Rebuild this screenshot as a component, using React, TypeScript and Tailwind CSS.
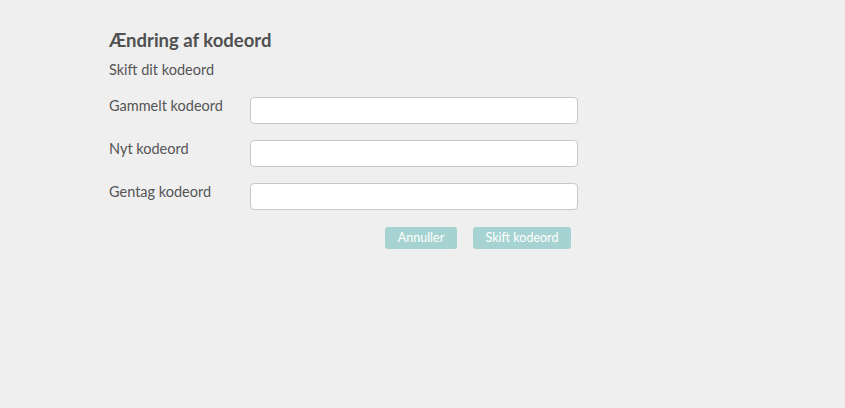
export default function App() {
  const fields = ["Gammelt kodeord", "Nyt kodeord", "Gentag kodeord"];

  return (
    <div className="min-h-[408px] w-full bg-[#efefef] pl-[109px] pt-[27px] text-[#555555] [font-family:Lato,'Open_Sans',sans-serif]">
      <div className="w-[469px]">
        <h1 className="text-[18.5px] font-bold leading-[26px] text-[#505050]">Ændring af kodeord</h1>
        <p className="mt-[8px] text-[14.5px] leading-[18px]">Skift dit kodeord</p>

        <div className="mt-[18px] flex flex-col gap-[16px]">
          {fields.map((label) => (
            <div key={label} className="flex items-start">
              <label className="w-[141px] text-[14.5px] leading-[18px]">{label}</label>
              <input
                type="password"
                className="h-[27px] w-[329px] rounded-[4px] border border-[#c8c8c8] bg-white px-2 outline-none"
              />
            </div>
          ))}
        </div>

        <div className="mt-[17px] flex justify-end gap-[16px] pr-[7px]">
          <button
            type="button"
            className="h-[22px] w-[72px] rounded-[3px] bg-[#a6d3d1] text-[12.5px] leading-[22px] text-white"
          >
            Annuller
          </button>
          <button
            type="button"
            className="h-[22px] w-[98px] rounded-[3px] bg-[#a6d3d1] text-[12.5px] leading-[22px] text-white"
          >
            Skift kodeord
          </button>
        </div>
      </div>
    </div>
  );
}
